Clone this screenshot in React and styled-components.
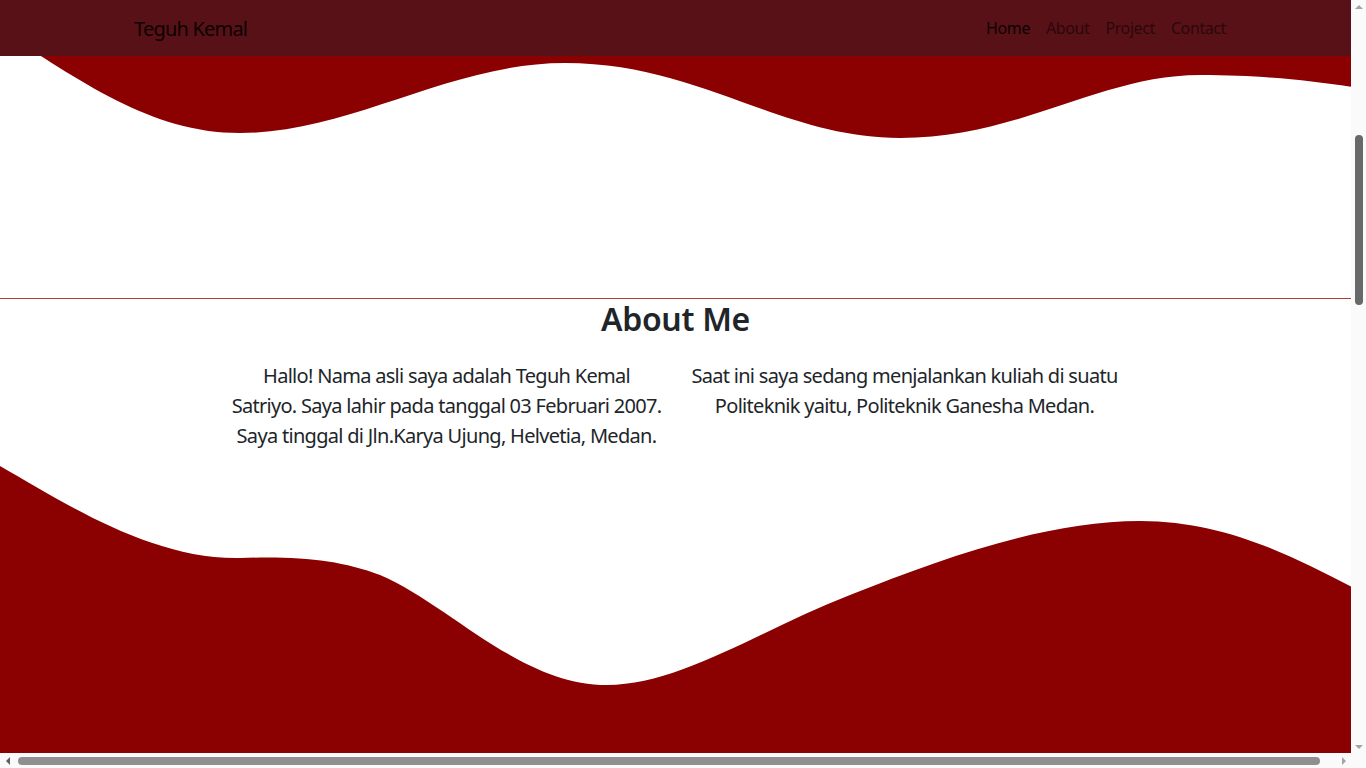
import React, { useLayoutEffect, useRef, useState } from 'react'
import styled, { createGlobalStyle } from 'styled-components'

const GlobalStyle = createGlobalStyle`
  html, body {
    margin: 0;
    height: 100%;
    overflow: hidden;
  }
  body {
    font-family: "Noto Sans", "Open Sans", sans-serif;
    color: #212529;
    background: #fff;
  }
`

const links = ['Home', 'About', 'Project', 'Contact']

function App() {
  const ref = useRef(null)
  const [bars, setBars] = useState({ vTop: 0, vLen: 100, hLeft: 0, hLen: 100 })

  const measure = () => {
    const el = ref.current
    if (!el) return
    const vTrack = el.clientHeight - 30
    const vLen = (vTrack * el.clientHeight) / el.scrollHeight
    const vMax = el.scrollHeight - el.clientHeight
    const vTop = vMax > 0 ? (el.scrollTop / vMax) * (vTrack - vLen) : 0
    const hTrack = el.clientWidth - 30
    const hLen = (hTrack * el.clientWidth) / el.scrollWidth + 2
    const hMax = el.scrollWidth - el.clientWidth
    const hLeft = hMax > 0 ? (el.scrollLeft / hMax) * (hTrack - hLen - 3) : 0
    setBars({ vTop, vLen, hLeft, hLen })
  }

  // the page is shown scrolled down to the About section
  useLayoutEffect(() => {
    if (ref.current) ref.current.scrollTop = 532
    measure()
  }, [])

  return (
    <>
      <GlobalStyle />
      <Frame>
        <Scroller ref={ref} onScroll={measure}>
          <Navbar>
            <Brand>Teguh Kemal</Brand>
            <NavList>
              {links.map((l, i) => (
                <NavLink key={l} active={i === 0}>{l}</NavLink>
              ))}
            </NavList>
          </Navbar>

          <Hero />

          <WaveBox height={298}>
            <svg width="100%" height="100%" viewBox="0 0 1373 298" preserveAspectRatio="none">
              <path
                fill="#8b0000"
                d="M0,30 C80,80 150,133 240,133 C350,133 450,63 565,63 C700,63 780,138 900,138 C1020,138 1100,75 1200,75 C1270,75 1320,82 1373,90 L1373,0 L0,0 Z"
              />
            </svg>
          </WaveBox>

          <AboutSection>
            <Title>About Me</Title>
            <Columns>
              <Text>
                Hallo! Nama asli saya adalah Teguh Kemal Satriyo. Saya lahir pada tanggal 03 Februari 2007. Saya tinggal di Jln.Karya Ujung, Helvetia, Medan.
              </Text>
              <Text>
                Saat ini saya sedang menjalankan kuliah di suatu Politeknik yaitu, Politeknik Ganesha Medan.
              </Text>
            </Columns>
          </AboutSection>

          <WaveBox height={313}>
            <svg width="100%" height="100%" viewBox="0 440 1373 313" preserveAspectRatio="none">
              <path
                fill="#8b0000"
                d="M0,466 C60,500 150,560 240,558 C300,556 340,560 380,575 C450,605 520,685 607,685 C680,685 760,630 850,595 C950,555 1050,521 1140,521 C1230,521 1300,560 1373,598 L1373,753 L0,753 Z"
              />
            </svg>
          </WaveBox>
          <RedBlock />
        </Scroller>

        <VBar>
          <ArrowCell><Arrow dir="up" /></ArrowCell>
          <VTrack>
            <VThumb style={{ marginTop: bars.vTop, height: bars.vLen }} />
          </VTrack>
          <ArrowCell><Arrow dir="down" /></ArrowCell>
        </VBar>
        <HBar>
          <ArrowCell><Arrow dir="left" /></ArrowCell>
          <HTrack>
            <HThumb style={{ marginLeft: 3 + bars.hLeft, width: bars.hLen }} />
          </HTrack>
          <ArrowCell><Arrow dir="right" /></ArrowCell>
        </HBar>
        <Corner />
      </Frame>
    </>
  )
}

const Frame = styled.div`
  display: grid;
  grid-template-columns: 1fr 15px;
  grid-template-rows: 1fr 15px;
  height: 100vh;
`

const Scroller = styled.div`
  overflow: scroll;
  scrollbar-width: none;
  &::-webkit-scrollbar {
    display: none;
  }
`

const VBar = styled.div`
  display: flex;
  flex-direction: column;
  background: #fafafa;
`

const HBar = styled.div`
  display: flex;
  background: #fafafa;
`

const Corner = styled.div`
  background: #fafafa;
`

const ArrowCell = styled.div`
  width: 15px;
  height: 15px;
  flex: none;
  display: flex;
  align-items: center;
  justify-content: center;
`

const Arrow = styled.span`
  width: 0;
  height: 0;
  border: 4px solid transparent;
  ${p => p.dir === 'up' && 'border-bottom-color: #a3a3a3; border-top-width: 0; margin-top: -2px;'}
  ${p => p.dir === 'down' && 'border-top-color: #a3a3a3; border-bottom-width: 0; margin-top: 2px;'}
  ${p => p.dir === 'left' && 'border-right-color: #606060; border-left-width: 0;'}
  ${p => p.dir === 'right' && 'border-left-color: #a3a3a3; border-right-width: 0;'}
`

const VTrack = styled.div`
  flex: 1;
  display: flex;
  flex-direction: column;
  align-items: center;
`

const VThumb = styled.div`
  width: 8px;
  border-radius: 4px;
  background: #686868;
`

const HTrack = styled.div`
  flex: 1;
  display: flex;
  align-items: center;
`

const HThumb = styled.div`
  height: 8px;
  border-radius: 4px;
  background: #8f8f8f;
`

const Navbar = styled.nav`
  position: sticky;
  top: 0;
  height: 56px;
  z-index: 10;
  box-sizing: border-box;
  background: #581116;
  display: flex;
  align-items: center;
  justify-content: space-between;
  padding: 0 117px 0 134px;
`

const Brand = styled.a`
  font-size: 20px;
  color: rgba(0, 0, 0, 0.9);
  letter-spacing: -0.8px;
  cursor: pointer;
`

const NavList = styled.ul`
  display: flex;
  list-style: none;
  margin: 0;
  padding: 0;
`

const NavLink = styled.li`
  font-size: 16px;
  padding: 0 8px;
  letter-spacing: -0.4px;
  color: ${p => (p.active ? 'rgba(0,0,0,0.9)' : 'rgba(0,0,0,0.55)')};
  cursor: pointer;
`

const Hero = styled.header`
  height: 476px;
  background: #8b0000;
  margin-right: -22px;
`

const WaveBox = styled.div`
  height: ${p => p.height}px;
  margin-right: -22px;
  svg {
    display: block;
  }
`

const AboutSection = styled.section`
  border-top: 1px solid #b33a3a;
  height: 141px;
  display: flex;
  flex-direction: column;
  align-items: center;
`

const Title = styled.h2`
  margin: 1px 0 0;
  font-size: 32px;
  line-height: 38px;
  font-weight: 600;
  letter-spacing: -0.3px;
`

const Columns = styled.div`
  display: grid;
  grid-template-columns: 458px 458px;
  margin-top: 23px;
`

const Text = styled.p`
  margin: 0;
  padding: 0 11px;
  font-size: 20px;
  line-height: 30px;
  letter-spacing: -0.7px;
  text-align: center;
`

const RedBlock = styled.div`
  height: 1918px;
  background: #8b0000;
  margin-right: -22px;
`

export default App
